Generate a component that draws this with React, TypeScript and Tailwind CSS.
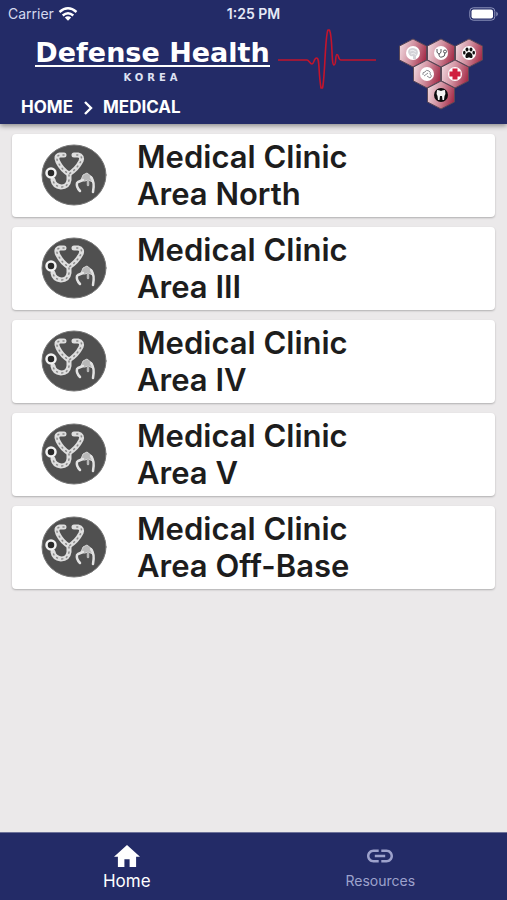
import React, { useState } from 'react';

interface Clinic {
  id: string;
  area: string;
}

const clinics: Clinic[] = [
  { id: 'north', area: 'Area North' },
  { id: 'area-3', area: 'Area III' },
  { id: 'area-4', area: 'Area IV' },
  { id: 'area-5', area: 'Area V' },
  { id: 'off-base', area: 'Area Off-Base' },
];

const HEX = '0,-14 13.5,-7 13.5,7 0,14 -13.5,7 -13.5,-7';

const StatusBar: React.FC = () => (
  <div className="grid grid-cols-3 items-center h-7 px-2 text-sm leading-4">
    <div className="flex items-center gap-1 text-[#d5d9ee]">
      <span>Carrier</span>
      <svg viewBox="0 0 20 15" className="w-5 h-4" fill="none" stroke="#fff" strokeWidth="2.4" aria-hidden="true">
        <path d="M1.5 5.5Q10 -2 18.5 5.5" />
        <path d="M4.7 9Q10 4.4 15.3 9" />
        <path d="M10 14.2L6.8 11Q10 8.4 13.2 11Z" fill="#fff" stroke="none" />
      </svg>
    </div>
    <span className="text-center font-semibold text-[#e6e9f7]">1:25 PM</span>
    <svg viewBox="0 0 30 14" className="w-[30px] h-[14px] justify-self-end" aria-hidden="true">
      <rect x="0.8" y="0.8" width="25" height="12.4" rx="3.5" fill="none" stroke="#8f95bd" />
      <rect x="2.5" y="2.5" width="21.5" height="9" rx="2" fill="#fff" />
      <path d="M27.3 4.5Q30.5 7 27.3 9.5Z" fill="#8f95bd" />
    </svg>
  </div>
);

const Pulse: React.FC = () => (
  <svg viewBox="0 0 98 62" className="w-[98px] h-[62px] shrink-0" fill="none" stroke="#c4142c" strokeWidth="1.6" strokeLinejoin="round" aria-hidden="true">
    <path d="M0 31H29C31 31 32 35 34 35C36 35 36 29 38.5 29C42 29 40 41 43 59H44.5C47 50 47 6 50 1H51.5C55 9 53 36 56 36C58.5 36 57 25.500 59 25.500C61 25.500 60 31 63 31H98" />
  </svg>
);

const HexBadge: React.FC<{ x: number; y: number; dark?: boolean; children: React.ReactNode }> = ({ x, y, dark, children }) => (
  <g transform={`translate(${x} ${y})`}>
    <polygon points={HEX} fill="url(#hexFill)" stroke="#5a4856" strokeWidth="1" />
    <circle r="7" fill={dark ? '#0b0b0d' : '#fff'} />
    {children}
  </g>
);

const HexLogo: React.FC = () => (
  <svg viewBox="0 0 84 72" className="w-[84px] h-[72px] shrink-0" role="img" aria-label="Health services">
    <defs>
      <linearGradient id="hexFill" x1="0" y1="0.3" x2="1" y2="0.6">
        <stop offset="0" stopColor="#efd5dc" />
        <stop offset="0.5" stopColor="#cf8c9c" />
        <stop offset="1" stopColor="#a52c48" />
      </linearGradient>
    </defs>
    <HexBadge x={14} y={15}>
      <path d="M-5 -1C-5 -5 0 -6 3 -4C6 -2 5 2 3 3V6H0V3C-3 4 -4 2 -5 -1Z" fill="#d3d3d8" />
      <path d="M-3 -2Q0 -4 3 -1M-2 1Q1 -1 3 2" fill="none" stroke="#f5f5f7" strokeWidth="0.8" />
    </HexBadge>
    <HexBadge x={42} y={15}>
      <path d="M-4 -4V-1Q-2 3 0 -1V-4M-2 1Q-2 5 1 4Q4 4 4 0" fill="none" stroke="#55555b" strokeWidth="1" />
      <circle cx="4" cy="-1.5" r="1.5" fill="none" stroke="#55555b" />
    </HexBadge>
    <HexBadge x={70} y={15}>
      <path d="M0 -1C2 -1 4 2 3.5 4C3 6 1 4.5 0 4.5S-3 6 -3.5 4C-4 2 -2 -1 0 -1Z" fill="#111" />
      <ellipse cx="-2" cy="-3.5" rx="1.5" ry="2" fill="#111" />
      <ellipse cx="2" cy="-3.5" rx="1.5" ry="2" fill="#111" />
      <ellipse cx="-4.7" cy="-0.3" rx="1.3" ry="1.9" fill="#111" />
      <ellipse cx="4.7" cy="-0.3" rx="1.3" ry="1.9" fill="#111" />
    </HexBadge>
    <HexBadge x={28} y={36}>
      <path d="M-4 1Q-5 -2 -2 -2Q-1 -5 2 -3Q4 -2 3 0Q6 2 3 4M-3 2L1 -1M0 2L3 4" fill="none" stroke="#8d8d94" strokeWidth="1" />
    </HexBadge>
    <HexBadge x={56} y={36}>
      <path d="M-2.5 -5.5H2.5V-2.5H5.5V2.5H2.5V5.5H-2.5V2.5H-5.5V-2.5H-2.5Z" fill="#d0203f" />
    </HexBadge>
    <HexBadge x={42} y={57} dark>
      <path d="M-4 -5Q-2 -5 0 -4Q2 -5 4 -5Q5 -1 3.5 1L3 5H1.5L1 1H-1L-1.5 5H-3L-3.5 1Q-5 -1 -4 -5Z" fill="#f4f4f4" />
    </HexBadge>
  </svg>
);

const ClinicIcon: React.FC = () => (
  <svg viewBox="0 0 66 62" className="w-[66px] h-[62px] shrink-0" fill="none" strokeLinecap="round" strokeLinejoin="round" aria-hidden="true">
    <ellipse cx="33" cy="31" rx="32" ry="30" fill="#505050" stroke="#777" />
    <g stroke="#dedede" strokeWidth="5">
      <path d="M23 11H19Q14 12 17 18Q21 26 28 30Q36 25 40 17Q42 12 37 11H33" />
      <path d="M28 31V36Q27 43 20 43Q13 42 12 36" />
    </g>
    <g stroke="#8a8a8a" strokeWidth="1.500" strokeDasharray="1 4">
      <path d="M23 11H19Q14 12 17 18Q21 26 28 30Q36 25 40 17Q42 12 37 11H33" />
      <path d="M28 31V36Q27 43 20 43Q13 42 12 36" />
    </g>
    <circle cx="10" cy="29" r="4.5" fill="#282828" stroke="#f3f3f3" strokeWidth="2.5" />
    <path d="M40 36L42 31L46 29L51 33L52 38L47 36L44 37Z" fill="#b8b8b8" stroke="#d5d5d5" />
    <g stroke="#e2e2e2" strokeWidth="2.5">
      <path d="M36 39Q35 43 39 47" />
      <path d="M37 38L42 36M50 33Q54 38 52 48" />
      <path d="M47 37V41" stroke="#b4b4b4" />
    </g>
  </svg>
);

const App: React.FC = () => {
  const [tab, setTab] = useState('home');

  return (
    <div className="flex flex-col min-h-screen bg-[#ebe9ea] font-['Inter',sans-serif]">
      <header className="bg-[#232b67] text-white shadow-[0_2px_5px_rgba(0,0,0,0.4)]">
        <StatusBar />
        <div className="flex justify-between pr-6">
          <div>
            <div className="flex items-center gap-2 pl-[35px] h-16">
              <div className="w-[235px] pt-1 text-center whitespace-nowrap">
                <h1 className="inline-block border-b-2 border-white font-['DejaVu_Sans',sans-serif] text-[27px] leading-6 font-bold">Defense Health</h1>
                <p className="pt-1 font-['DejaVu_Sans',sans-serif] text-[10px] leading-3 font-bold tracking-[4px] text-[#dfe2f3]">KOREA</p>
              </div>
              <Pulse />
            </div>
            <nav aria-label="Breadcrumb" className="flex items-center gap-2 h-8 pl-[21px] text-[17px] font-bold">
              <a href="#home">HOME</a>
              <svg viewBox="0 0 14 16" className="w-[14px] h-4" fill="none" stroke="currentColor" strokeWidth="2.4" aria-hidden="true">
                <path d="M4 2L10 8L4 14" />
              </svg>
              <a href="#medical" aria-current="page">MEDICAL</a>
            </nav>
          </div>
          <div className="pt-[10px]">
            <HexLogo />
          </div>
        </div>
      </header>

      <main className="flex flex-col flex-1 gap-[10px] px-3 py-[10px]">
        {clinics.map(clinic => (
          <button key={clinic.id} className="flex items-center h-[83px] pb-[2px] pl-[29px] text-left bg-white rounded shadow-[0_1px_2px_rgba(0,0,0,0.25)]">
            <ClinicIcon />
            <span className="pl-[30px] text-[31px] leading-[37px] font-semibold text-[#1d1d1d]">
              Medical Clinic
              <br />
              {clinic.area}
            </span>
          </button>
        ))}
      </main>

      <nav aria-label="Main" className="grid grid-cols-2 h-[68px] bg-[#232b67] border-t border-[#6d7299]">
        <a href="#home" onClick={() => setTab('home')} className={`flex flex-col items-center pt-[10px] text-[17px] leading-6 ${tab === 'home' ? 'text-white' : 'text-[#9da2cc]'}`}>
          <svg viewBox="2 2 20 19" className="w-[26px] h-[26px]" fill="currentColor" aria-hidden="true">
            <path d="M10 20v-6h4v6h5v-8h3L12 3 2 12h3v8z" />
          </svg>
          Home
        </a>
        <a href="#resources" onClick={() => setTab('resources')} className={`flex flex-col items-center pt-[10px] text-sm leading-6 ${tab === 'resources' ? 'text-white' : 'text-[#9da2cc]'}`}>
          <svg viewBox="2 2 20 20" className="w-[26px] h-[26px]" fill="currentColor" aria-hidden="true">
            <path d="M3.900 12c0-1.710 1.390-3.100 3.100-3.100h4V7H7c-2.760 0-5 2.240-5 5s2.240 5 5 5h4v-1.900H7c-1.710 0-3.100-1.390-3.100-3.100zM8 13h8v-2H8v2zm9-6h-4v1.900h4c1.710 0 3.100 1.390 3.100 3.100s-1.390 3.100-3.100 3.100h-4V17h4c2.760 0 5-2.240 5-5s-2.240-5-5-5z" />
          </svg>
          Resources
        </a>
      </nav>
    </div>
  );
};

export default App;
